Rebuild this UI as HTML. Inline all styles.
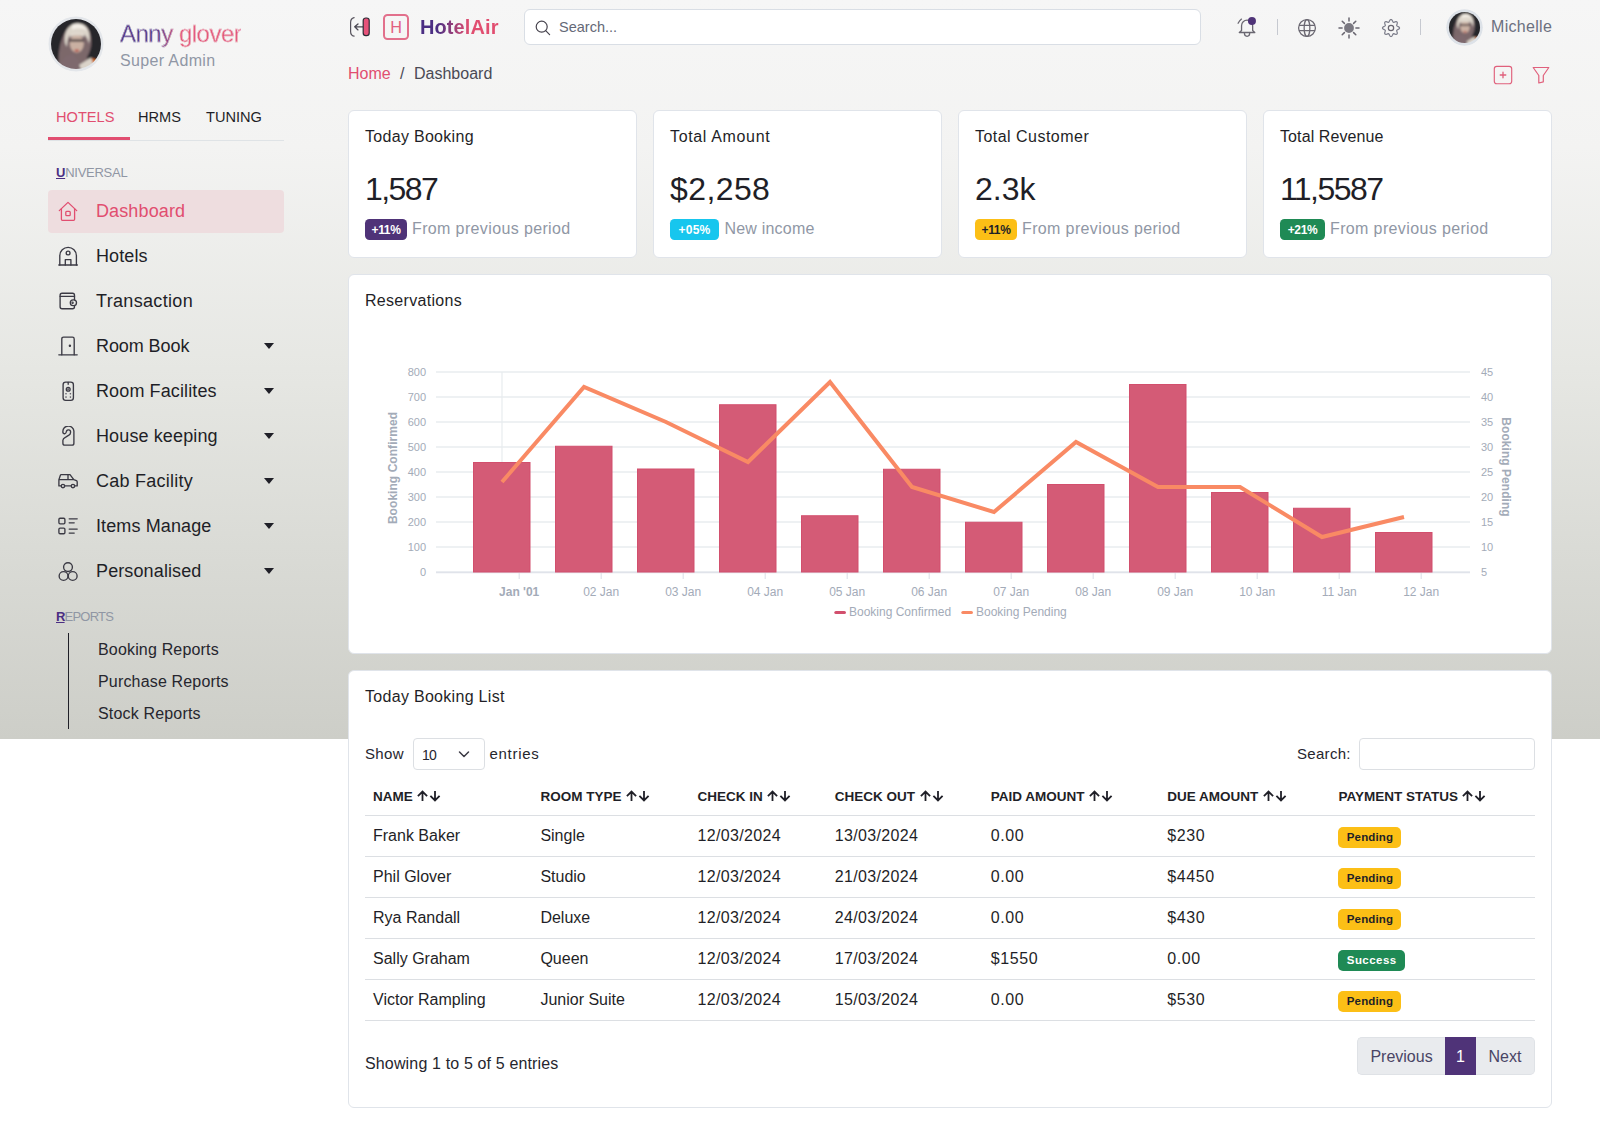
<!DOCTYPE html>
<html lang="en">
<head>
<meta charset="utf-8">
<title>HotelAir - Dashboard</title>
<style>
*{box-sizing:border-box;}
html,body{margin:0;padding:0;}
body{width:1600px;height:1124px;position:relative;overflow:hidden;background:#fff;font-family:"Liberation Sans",Arial,sans-serif;color:#1f1f27;font-size:16px;}
.bg{position:absolute;left:0;top:0;width:1600px;height:739px;background:linear-gradient(to bottom,#f6f6f6 0%,#f3f3f2 20%,#e6e7e3 50%,#cdcec8 100%);}
a{text-decoration:none;color:inherit;}
svg{display:block;}
.abs{position:absolute;white-space:nowrap;}
/* sidebar */
.sidebar{position:absolute;left:0;top:0;width:300px;height:739px;}
.avatar{position:absolute;border-radius:50%;overflow:hidden;}
.uname{left:120px;top:19px;font-size:24px;line-height:30px;letter-spacing:-0.5px;background:linear-gradient(90deg,#472a80 0%,#472a80 30%,#e14e70 50%,#e14e70 100%);-webkit-background-clip:text;background-clip:text;color:transparent;-webkit-text-stroke:0.450px #f5f5f5;}
.uname b{font-weight:400;}
.urole{left:120px;top:51px;font-size:16px;line-height:20px;color:#9097a5;letter-spacing:0.35px;}
.tabs{position:absolute;left:48px;top:100px;width:236px;height:41px;border-bottom:1px solid #dfe3e6;}
.tabs a{position:absolute;top:7px;font-size:14.6px;line-height:20px;color:#1f1f27;}
.tabs a.on{color:#e14e70;}
.tabs .bar{position:absolute;left:0;top:37px;width:82px;height:3px;background:#e14e70;}
.mlabel{font-size:13px;line-height:16px;color:#9096a4;left:56px;}
.mlabel u{color:#4b2e83;text-decoration:underline;font-weight:700;}
.menu{position:absolute;left:48px;top:190px;width:236px;margin:0;padding:0;list-style:none;}
.menu li{position:relative;height:43px;margin-bottom:2px;border-radius:4px;}
.menu li.on{background:#eedddf;color:#e14e70;}
.menu li svg.ic{position:absolute;left:9px;top:11px;width:22px;height:22px;}
.menu li span{position:absolute;left:48px;top:10px;font-size:18px;line-height:23px;white-space:nowrap;letter-spacing:0.12px;}
.menu li i{position:absolute;left:216px;top:18.200px;width:0;height:0;border-left:5.5px solid transparent;border-right:5.5px solid transparent;border-top:6px solid #1f1f27;}
.sub{position:absolute;left:68px;top:633px;height:96px;border-left:1.5px solid #1f1f27;}
.sub a{position:absolute;left:29px;font-size:16px;line-height:20px;white-space:nowrap;color:#26262e;letter-spacing:0.17px;}
/* main */
main{position:absolute;left:0;top:0;width:1600px;height:1124px;}
.card{position:absolute;background:#fff;border:1px solid #e0e4ea;border-radius:6px;}
.ctitle{position:absolute;left:16px;top:16px;letter-spacing:0.3px;margin:0;font-size:16px;line-height:20px;font-weight:400;color:#1f1f27;white-space:nowrap;}
.stat{top:110px;width:289px;height:148px;}
.stat .num{position:absolute;left:16px;top:58px;font-size:32px;line-height:40px;color:#1f1f27;white-space:nowrap;}
.stat .bd{position:absolute;left:16px;top:108px;height:21px;border-radius:4.5px;font-size:12px;font-weight:700;line-height:22.500px;color:#fff;text-align:center;white-space:nowrap;letter-spacing:-0.350px;}
.stat .cap{position:absolute;top:108px;font-size:16px;line-height:20px;color:#9097a5;white-space:nowrap;letter-spacing:0.37px;}
.chartcard{left:348px;top:274px;width:1204px;height:380px;}
.chart{position:absolute;left:-1px;top:-1px;}
.tablecard{left:348px;top:670px;width:1204px;height:438px;}
/* header */
.search{position:absolute;left:524px;top:9px;width:677px;height:36px;background:#fff;border:1px solid #d9dee5;border-radius:6px;}
.search span{position:absolute;left:34px;top:8px;font-size:14.5px;line-height:18px;color:#656977;}
.vdiv{position:absolute;top:19px;width:1px;height:16px;background:#c6c9d0;}
.crumb{top:64px;font-size:16px;line-height:20px;}
/* table */
.tbl{position:absolute;left:16px;top:103px;width:1170px;border-collapse:collapse;}
.tbl th{height:41px;padding:4px 8px 0;text-align:left;font-size:13.5px;font-weight:700;color:#1f1f27;border-bottom:1px solid #dcdfe3;white-space:nowrap;}
.tbl td{height:41px;padding:0 8px;font-size:16px;color:#1f1f27;border-bottom:1px solid #dcdfe3;white-space:nowrap;}
.pill{display:inline-block;height:21px;line-height:21px;padding:0 8.3px;letter-spacing:0.15px;border-radius:5px;font-size:11.5px;font-weight:700;vertical-align:middle;position:relative;top:2px;}
.pill.p{background:#fcbf16;color:#1f1f27;}
.pill.s{background:#1f8a55;color:#fff;}
.ctl{font-size:16px;line-height:20px;color:#26262e;}
.box{position:absolute;background:#fff;border:1px solid #dcdfe3;border-radius:4px;}
.so{display:inline-block;width:24px;height:12px;margin-left:4.500px;vertical-align:-1.500px;}
.tbl td.d{letter-spacing:0.35px;}
.tbl td.m{letter-spacing:0.6px;}
.mlabel.u2{letter-spacing:-0.25px;}
.mlabel.r2{letter-spacing:-0.8px;}
.pager{position:absolute;left:1008px;top:366px;width:178px;height:38px;}
.pager a{position:absolute;top:0;height:38px;line-height:37px;font-size:16px;color:#4a4565;text-align:center;background:#e9ebee;border:1px solid #dfe2e6;}
.pager a.pv{border-right:0;border-radius:5px 0 0 5px;}
.pager a.nx{border-left:0;border-radius:0 5px 5px 0;}
.pager a.on{background:#4f3378;border-color:#4f3378;color:#fff;}

</style>
</head>
<body>
<div class="bg"></div>
<aside class="sidebar">
  <svg class="avatar" style="left:48px;top:16px;width:56px;height:56px" viewBox="0 0 56 56">
    <defs><clipPath id="av1"><circle cx="28" cy="28" r="25"/></clipPath><filter id="bl1"><feGaussianBlur stdDeviation="1.1"/></filter></defs>
    <circle cx="28" cy="28" r="27.5" fill="#e3e6ea"/>
    <g clip-path="url(#av1)"><g filter="url(#bl1)">
      <rect width="56" height="56" fill="#25282c"/>
      <path d="M12 56 C9 42 11 24 19 13 C26 5 39 6 42 17 C45 28 42 36 39 41 L44 56 Z" fill="#7b676b"/>
      <path d="M17 27 C15 13 24 6 32 7.500 C40 9 43 17 41 28 C40 22 37 18 33 17 L22 18 C20 21 19 25 19 31 Z" fill="#dcd5ca"/>
      <path d="M24 9 C30 6 37 9 39 15 C35 12 29 12 24 14 Z" fill="#f3eee6"/>
      <ellipse cx="28.800" cy="27.500" rx="7" ry="9.300" fill="#c9b0a2"/>
      <path d="M21.500 17.500 C25 14.500 33 14.500 36 18 L36 21 C32 19 25 19 21.500 21.500 Z" fill="#e0d8cd"/>
      <path d="M21.500 24.500 h14.500" stroke="#4a4042" stroke-width="2.200"/>
      <path d="M26.800 34.500 h4" stroke="#b5483a" stroke-width="1.900"/>
      <path d="M12 56 C12 44 17 38 25 39 L31 45 L30 56 Z" fill="#7e696e"/>
      <path d="M31 49 L43 41.500 L47 50 L35 57 Z" fill="#dad3c9"/>
      <path d="M43.500 42 L49 44 L46 51 Z" fill="#d2691e"/>
    </g></g>
  </svg>
  <div class="abs uname">Anny <b>glover</b></div>
  <div class="abs urole">Super Admin</div>
  <nav class="tabs">
    <a class="on" style="left:8px">HOTELS</a>
    <a style="left:90px">HRMS</a>
    <a style="left:158px">TUNING</a>
    <div class="bar"></div>
  </nav>
  <div class="abs mlabel u2" style="top:165px"><u>U</u>NIVERSAL</div>
  <ul class="menu">
    <li class="on"><svg class="ic" viewBox="0 0 22 22" fill="none" stroke="#e14e70" stroke-width="1.300" stroke-linecap="round" stroke-linejoin="round"><path d="M2.300 9.600 L11 1.400 L19.700 9.600"/><path d="M4.400 7.800 V18.300 Q4.400 19.300 5.400 19.300 H16.600 Q17.600 19.300 17.600 18.300 V7.800"/><rect x="8.800" y="10.300" width="4.400" height="4.400" rx="0.900"/></svg><span>Dashboard</span></li>
    <li><svg class="ic" viewBox="0 0 22 22" fill="none" stroke="#3b3a44" stroke-width="1.350" stroke-linecap="round" stroke-linejoin="round"><path d="M2.800 19 V9.700 A8.300 8.300 0 0 1 19.400 9.700 V19"/><path d="M1.800 19 H20.400"/><circle cx="11.100" cy="7" r="1.900"/><path d="M8.300 19 V13.600 H13.900 V19"/></svg><span>Hotels</span></li>
    <li><svg class="ic" viewBox="0 0 22 22" fill="none" stroke="#3b3a44" stroke-width="1.350" stroke-linecap="round" stroke-linejoin="round"><path d="M17.500 8.800 V4.200 Q17.500 2.200 15.500 2.200 H5.100 Q3.100 2.200 3.100 4.200 V15.700 Q3.100 17.700 5.100 17.700 H15.500 Q17.500 17.700 17.500 15.700 V14.600"/><path d="M3.100 5.300 H17.500"/><rect x="13.300" y="8.800" width="6.200" height="5.800" rx="2.900"/><circle cx="15.600" cy="11.700" r="0.500"/></svg><span style="letter-spacing:0.33px">Transaction</span></li>
    <li><svg class="ic" viewBox="0 0 22 22" fill="none" stroke="#3b3a44" stroke-width="1.350" stroke-linecap="round" stroke-linejoin="round"><path d="M4.800 18.800 V2.900 Q4.800 1.100 6.600 1.100 H15.400 Q17.200 1.100 17.200 2.900 V18.800"/><path d="M1.800 18.800 H20.200"/><circle cx="12.900" cy="9.800" r="0.550" fill="#3b3a44"/></svg><span style="letter-spacing:-0.08px">Room Book</span><i></i></li>
    <li><svg class="ic" viewBox="0 0 22 22" fill="none" stroke="#3b3a44" stroke-width="1.350" stroke-linecap="round" stroke-linejoin="round"><rect x="6.100" y="1.100" width="10.300" height="18.200" rx="2.600"/><circle cx="11.200" cy="8.200" r="1.900"/><circle cx="11.200" cy="8.200" r="0.300"/><path d="M11.200 1.300 V3.300"/><g stroke="none" fill="#55535e"><circle cx="9" cy="12.800" r="0.800"/><circle cx="13.400" cy="12.800" r="0.800"/><circle cx="9" cy="16.100" r="0.800"/><circle cx="13.400" cy="16.100" r="0.800"/></g></svg><span>Room Facilites</span><i></i></li>
    <li><svg class="ic" viewBox="0 0 22 22" fill="none" stroke="#3b3a44" stroke-width="1.350" stroke-linecap="round" stroke-linejoin="round"><path d="M6.900 7.600 Q5.600 7 5.900 5.600 A5.500 5.200 0 0 1 16.900 5 V17.200 Q16.900 19.100 15 19.100 H7.800 Q5.900 19.100 5.900 17.200 V14.200 Q5.900 12.500 8.700 11.100 L11.900 9.200 Q13.600 8 13.500 6.500 A2.100 2.100 0 0 0 9.400 5.500 L8.800 7 Q8 8.200 6.900 7.600 Z"/></svg><span>House keeping</span><i></i></li>
    <li><svg class="ic" viewBox="0 0 22 22" fill="none" stroke="#3b3a44" stroke-width="1.350" stroke-linecap="round" stroke-linejoin="round"><path d="M1.900 8.600 V14.900 H4.200 M7.700 14.900 H14.200 M17.700 14.900 H20.200 V11 Q20.200 10 19.400 9.600 L16.800 8.600 L13 3.600 H4.200 Q3.600 3.600 3.400 4.200 L1.900 8.600 H16.800 M11 3.600 V8.600"/><circle cx="5.950" cy="15" r="1.700"/><circle cx="15.950" cy="15" r="1.700"/></svg><span style="letter-spacing:0.25px">Cab Facility</span><i></i></li>
    <li><svg class="ic" viewBox="0 0 22 22" fill="none" stroke="#3b3a44" stroke-width="1.350" stroke-linecap="round" stroke-linejoin="round"><rect x="1.900" y="2.200" width="6" height="5.600" rx="1.200"/><rect x="1.900" y="12.100" width="6" height="5.600" rx="1.200"/><path d="M12.200 2.800 H20.200 M12.200 6.800 H17.200 M12.200 13.100 H20.200 M12.200 17.100 H17.200"/></svg><span>Items Manage</span><i></i></li>
    <li><svg class="ic" viewBox="0 0 22 22" fill="none" stroke="#3b3a44" stroke-width="1.350" stroke-linecap="round" stroke-linejoin="round"><circle cx="11" cy="6.100" r="4.400"/><circle cx="6.550" cy="15" r="4.400"/><circle cx="15.700" cy="15" r="4.400"/></svg><span>Personalised</span><i></i></li>
  </ul>
  <div class="abs mlabel r2" style="top:609px"><u>R</u>EPORTS</div>
  <div class="sub">
    <a style="top:6.500px">Booking Reports</a>
    <a style="top:38.500px">Purchase Reports</a>
    <a style="top:70.500px">Stock Reports</a>
  </div>
</aside>

<main>
<header>
  <svg class="abs" style="left:348px;top:14px;width:26px;height:26px" viewBox="0 0 26 26" fill="none">
    <path d="M6.100 3.700 Q2.600 4.500 2.600 8.500 V17.500 Q2.600 21.500 6.100 22.200" stroke="#55525c" stroke-width="1.200" stroke-linecap="round"/>
    <path d="M14.800 12.850 H6.700 M10 9.900 L6.700 12.850 L10 15.900" stroke="#4a4852" stroke-width="1.300" stroke-linecap="round" stroke-linejoin="round"/>
    <rect x="15.200" y="4" width="6" height="17.600" rx="2.600" fill="#e75279" stroke="#2d2b36" stroke-width="1.200"/>
  </svg>
  <div class="abs" style="left:383px;top:14px;width:26px;height:26px;border:2px solid #e2708c;border-radius:4.500px;color:#e2607f;font-size:16.200px;line-height:22px;text-align:center">H</div>
  <div class="abs" style="left:420px;top:15px;font-size:20px;line-height:24px;font-weight:700;letter-spacing:0.100px;background:linear-gradient(90deg,#4b2e83 0%,#4b2e83 22%,#e14e70 62%,#e14e70 100%);-webkit-background-clip:text;background-clip:text;color:transparent">HotelAir</div>
  <div class="search">
    <svg class="abs" style="left:9px;top:9px;width:18px;height:18px" viewBox="0 0 18 18" fill="none" stroke="#46434d" stroke-width="1.200" stroke-linecap="round"><circle cx="7.700" cy="7.700" r="5.500"/><path d="M11.700 11.700 L15.600 15.600"/></svg>
    <span>Search...</span>
  </div>
  <!-- bell -->
  <svg class="abs" style="left:1235px;top:14px;width:26px;height:26px" viewBox="0 0 26 26" fill="none" stroke="#6a6771" stroke-width="1.300" stroke-linecap="round" stroke-linejoin="round">
    <path d="M6.550 16.500 V11.700 A5.550 5.550 0 0 1 17.650 11.700 V16.500 L19.800 18.500 H4.300 Z"/>
    <path d="M9.400 19.100 A2.650 3.200 0 0 0 14.700 19.100"/>
    <path d="M3.100 9.250 Q4.500 6.800 6.500 5.100"/>
    <circle cx="16.950" cy="6.950" r="4" fill="#4f3378" stroke="none"/>
  </svg>
  <div class="vdiv" style="left:1277px"></div>
  <!-- globe -->
  <svg class="abs" style="left:1297px;top:17.800px;width:20px;height:20px" viewBox="0 0 20 20" fill="none" stroke="#6a6771" stroke-width="1.250">
    <circle cx="10" cy="10" r="8.400"/><ellipse cx="10" cy="10" rx="2.850" ry="8.400"/><path d="M2 7.400 H18 M2 12.600 H18"/>
  </svg>
  <!-- sun -->
  <svg class="abs" style="left:1338px;top:17.200px;width:22px;height:22px" viewBox="0 0 22 22" fill="none" stroke="#6a6771" stroke-width="1.500" stroke-linecap="round">
    <circle cx="11" cy="11" r="4.900" fill="#7a7881" stroke="none"/>
    <path d="M17.90 11.00 L21.00 11.00 M15.60 15.60 L17.79 17.79 M11.00 17.90 L11.00 21.00 M6.40 15.60 L4.21 17.79 M4.10 11.00 L1.00 11.00 M6.40 6.40 L4.21 4.21 M11.00 4.10 L11.00 1.00 M15.60 6.40 L17.79 4.21"/>
  </svg>
  <!-- gear -->
  <svg class="abs" style="left:1381px;top:18px;width:20px;height:20px" viewBox="0 0 20 20" fill="none" stroke="#7d7e8b" stroke-width="1.250" stroke-linejoin="round">
    <path d="M18.50 10.00 L18.33 10.55 L17.86 11.03 L17.21 11.43 L16.54 11.75 L16.02 12.04 L15.73 12.37 L15.70 12.81 L15.87 13.39 L16.11 14.08 L16.29 14.82 L16.27 15.50 L16.01 16.01 L15.50 16.27 L14.82 16.29 L14.08 16.11 L13.39 15.87 L12.81 15.70 L12.37 15.73 L12.04 16.02 L11.75 16.54 L11.43 17.21 L11.03 17.86 L10.55 18.33 L10.00 18.50 L9.45 18.33 L8.97 17.86 L8.57 17.21 L8.25 16.54 L7.96 16.02 L7.63 15.73 L7.19 15.70 L6.61 15.87 L5.92 16.11 L5.18 16.29 L4.50 16.27 L3.99 16.01 L3.73 15.50 L3.71 14.82 L3.89 14.08 L4.13 13.39 L4.30 12.81 L4.27 12.37 L3.98 12.04 L3.46 11.75 L2.79 11.43 L2.14 11.03 L1.67 10.55 L1.50 10.00 L1.67 9.45 L2.14 8.97 L2.79 8.57 L3.46 8.25 L3.98 7.96 L4.27 7.63 L4.30 7.19 L4.13 6.61 L3.89 5.92 L3.71 5.18 L3.73 4.50 L3.99 3.99 L4.50 3.73 L5.18 3.71 L5.92 3.89 L6.61 4.13 L7.19 4.30 L7.63 4.27 L7.96 3.98 L8.25 3.46 L8.57 2.79 L8.97 2.14 L9.45 1.67 L10.00 1.50 L10.55 1.67 L11.03 2.14 L11.43 2.79 L11.75 3.46 L12.04 3.98 L12.37 4.27 L12.81 4.30 L13.39 4.13 L14.08 3.89 L14.82 3.71 L15.50 3.73 L16.01 3.99 L16.27 4.50 L16.29 5.18 L16.11 5.92 L15.87 6.61 L15.70 7.19 L15.73 7.63 L16.02 7.96 L16.54 8.25 L17.21 8.57 L17.86 8.97 L18.33 9.45 Z"/>
    <circle cx="10" cy="10" r="2.650" stroke="#6a6771"/>
  </svg>
  <div class="vdiv" style="left:1420px"></div>
  <svg class="avatar" style="left:1445.500px;top:8.500px;width:37px;height:37px" viewBox="0 0 56 56">
    <defs><clipPath id="av2"><circle cx="28" cy="28" r="23.500"/></clipPath><filter id="bl2"><feGaussianBlur stdDeviation="1.400"/></filter></defs>
    <circle cx="28" cy="28" r="27.700" fill="#dde2e8"/>
    <g clip-path="url(#av2)"><g filter="url(#bl2)">
      <rect width="56" height="56" fill="#25282c"/>
      <path d="M12 56 C9 42 11 24 19 13 C26 5 39 6 42 17 C45 28 42 36 39 41 L44 56 Z" fill="#7b676b"/>
      <path d="M17 27 C15 13 24 6 32 7.500 C40 9 43 17 41 28 C40 22 37 18 33 17 L22 18 C20 21 19 25 19 31 Z" fill="#dcd5ca"/>
      <path d="M24 9 C30 6 37 9 39 15 C35 12 29 12 24 14 Z" fill="#f3eee6"/>
      <ellipse cx="28.800" cy="27.500" rx="7" ry="9.300" fill="#c9b0a2"/>
      <path d="M21.500 17.500 C25 14.500 33 14.500 36 18 L36 21 C32 19 25 19 21.500 21.500 Z" fill="#e0d8cd"/>
      <path d="M21.500 24.500 h14.500" stroke="#4a4042" stroke-width="2.200"/>
      <path d="M26.800 34.500 h4" stroke="#b5483a" stroke-width="1.900"/>
      <path d="M12 56 C12 44 17 38 25 39 L31 45 L30 56 Z" fill="#7e696e"/>
      <path d="M31 49 L43 41.500 L47 50 L35 57 Z" fill="#dad3c9"/>
      <path d="M43.500 42 L49 44 L46 51 Z" fill="#d2691e"/>
    </g></g>
  </svg>
  <div class="abs" style="left:1491px;top:17px;font-size:16px;line-height:20px;letter-spacing:0.300px;color:#6c7080">Michelle</div>
  <div class="abs crumb" style="left:348px;color:#e14e70">Home</div>
  <div class="abs crumb" style="left:400px;color:#4a4a55">/</div>
  <div class="abs crumb" style="left:414px;color:#4a4a55">Dashboard</div>
  <svg class="abs" style="left:1493px;top:65px;width:20px;height:20px" viewBox="0 0 20 20" fill="none" stroke="#e0607c" stroke-width="1.150" stroke-linecap="round"><rect x="1.300" y="1.300" width="17.400" height="17.400" rx="2.500"/><path d="M10 7.200 V12.800 M7.200 10 H12.800" stroke-width="1.300"/></svg>
  <svg class="abs" style="left:1531px;top:65px;width:20px;height:20px" viewBox="0 0 20 20" fill="none" stroke="#e0607c" stroke-width="1.200" stroke-linejoin="round"><path d="M2.200 2.500 H17.800 L12.300 10.500 V16.800 L7.800 18 V10.500 Z"/></svg>
</header>

<section class="card stat" style="left:348px">
  <h5 class="ctitle">Today Booking</h5>
  <div class="num" style="letter-spacing:-1.6px">1,587</div>
  <span class="bd" style="background:#4f3378;width:42px">+11%</span>
  <span class="cap" style="left:63px">From previous period</span>
</section>
<section class="card stat" style="left:653px">
  <h5 class="ctitle" style="letter-spacing:0.65px">Total Amount</h5>
  <div class="num" style="letter-spacing:0.4px">$2,258</div>
  <span class="bd" style="background:#17c6ee;width:49px;letter-spacing:0.2px">+05%</span>
  <span class="cap" style="left:70.5px;letter-spacing:0.2px">New income</span>
</section>
<section class="card stat" style="left:958px">
  <h5 class="ctitle" style="letter-spacing:0.47px">Total Customer</h5>
  <div class="num">2.3k</div>
  <span class="bd" style="background:#fcbf16;color:#1f1f27;width:42px">+11%</span>
  <span class="cap" style="left:63px">From previous period</span>
</section>
<section class="card stat" style="left:1263px">
  <h5 class="ctitle" style="letter-spacing:0.1px">Total Revenue</h5>
  <div class="num" style="letter-spacing:-1.55px">11,5587</div>
  <span class="bd" style="background:#1f8a55;width:45px">+21%</span>
  <span class="cap" style="left:66px">From previous period</span>
</section>

<section class="card chartcard">
<h5 class="ctitle">Reservations</h5>
<svg class="chart" width="1204" height="379" viewBox="0 0 1204 379" font-family="'Liberation Sans', Helvetica, Arial, sans-serif">
<line x1="88" x2="1122" y1="98" y2="98" stroke="#e8ecef" stroke-width="1.4"/>
<line x1="88" x2="1122" y1="123" y2="123" stroke="#e8ecef" stroke-width="1.4"/>
<line x1="88" x2="1122" y1="148" y2="148" stroke="#e8ecef" stroke-width="1.4"/>
<line x1="88" x2="1122" y1="173" y2="173" stroke="#e8ecef" stroke-width="1.4"/>
<line x1="88" x2="1122" y1="198" y2="198" stroke="#e8ecef" stroke-width="1.4"/>
<line x1="88" x2="1122" y1="223" y2="223" stroke="#e8ecef" stroke-width="1.4"/>
<line x1="88" x2="1122" y1="248" y2="248" stroke="#e8ecef" stroke-width="1.4"/>
<line x1="88" x2="1122" y1="273" y2="273" stroke="#e8ecef" stroke-width="1.4"/>
<line x1="88" x2="1122" y1="298" y2="298" stroke="#e8ecef" stroke-width="1.4"/>
<line x1="154" x2="154" y1="98" y2="298" stroke="#e8ecef" stroke-width="1.2"/>
<line x1="88" x2="1122" y1="298.5" y2="298.5" stroke="#e0e3ea" stroke-width="1.4"/>
<rect x="125.5" y="188.5" width="56.5" height="109.5" fill="#d45b76" stroke="#d24f6d" stroke-width="1"/>
<rect x="207.5" y="172.25" width="56.5" height="125.75" fill="#d45b76" stroke="#d24f6d" stroke-width="1"/>
<rect x="289.5" y="195.0" width="56.5" height="103.0" fill="#d45b76" stroke="#d24f6d" stroke-width="1"/>
<rect x="371.5" y="130.75" width="56.5" height="167.25" fill="#d45b76" stroke="#d24f6d" stroke-width="1"/>
<rect x="453.5" y="241.75" width="56.5" height="56.25" fill="#d45b76" stroke="#d24f6d" stroke-width="1"/>
<rect x="535.5" y="195.25" width="56.5" height="102.75" fill="#d45b76" stroke="#d24f6d" stroke-width="1"/>
<rect x="617.5" y="248.25" width="56.5" height="49.75" fill="#d45b76" stroke="#d24f6d" stroke-width="1"/>
<rect x="699.5" y="210.5" width="56.5" height="87.5" fill="#d45b76" stroke="#d24f6d" stroke-width="1"/>
<rect x="781.5" y="110.5" width="56.5" height="187.5" fill="#d45b76" stroke="#d24f6d" stroke-width="1"/>
<rect x="863.5" y="218.5" width="56.5" height="79.5" fill="#d45b76" stroke="#d24f6d" stroke-width="1"/>
<rect x="945.5" y="234.25" width="56.5" height="63.75" fill="#d45b76" stroke="#d24f6d" stroke-width="1"/>
<rect x="1027.5" y="258.5" width="56.5" height="39.5" fill="#d45b76" stroke="#d24f6d" stroke-width="1"/>
<line x1="171.2" x2="171.2" y1="299" y2="305" stroke="#e0e3ea" stroke-width="1.2"/>
<text x="171.2" y="322" text-anchor="middle" font-size="12" fill="#a3abb8" font-weight="700">Jan '01</text>
<line x1="253.2" x2="253.2" y1="299" y2="305" stroke="#e0e3ea" stroke-width="1.2"/>
<text x="253.2" y="322" text-anchor="middle" font-size="12" fill="#a3abb8">02 Jan</text>
<line x1="335.2" x2="335.2" y1="299" y2="305" stroke="#e0e3ea" stroke-width="1.2"/>
<text x="335.2" y="322" text-anchor="middle" font-size="12" fill="#a3abb8">03 Jan</text>
<line x1="417.2" x2="417.2" y1="299" y2="305" stroke="#e0e3ea" stroke-width="1.2"/>
<text x="417.2" y="322" text-anchor="middle" font-size="12" fill="#a3abb8">04 Jan</text>
<line x1="499.2" x2="499.2" y1="299" y2="305" stroke="#e0e3ea" stroke-width="1.2"/>
<text x="499.2" y="322" text-anchor="middle" font-size="12" fill="#a3abb8">05 Jan</text>
<line x1="581.2" x2="581.2" y1="299" y2="305" stroke="#e0e3ea" stroke-width="1.2"/>
<text x="581.2" y="322" text-anchor="middle" font-size="12" fill="#a3abb8">06 Jan</text>
<line x1="663.2" x2="663.2" y1="299" y2="305" stroke="#e0e3ea" stroke-width="1.2"/>
<text x="663.2" y="322" text-anchor="middle" font-size="12" fill="#a3abb8">07 Jan</text>
<line x1="745.2" x2="745.2" y1="299" y2="305" stroke="#e0e3ea" stroke-width="1.2"/>
<text x="745.2" y="322" text-anchor="middle" font-size="12" fill="#a3abb8">08 Jan</text>
<line x1="827.2" x2="827.2" y1="299" y2="305" stroke="#e0e3ea" stroke-width="1.2"/>
<text x="827.2" y="322" text-anchor="middle" font-size="12" fill="#a3abb8">09 Jan</text>
<line x1="909.2" x2="909.2" y1="299" y2="305" stroke="#e0e3ea" stroke-width="1.2"/>
<text x="909.2" y="322" text-anchor="middle" font-size="12" fill="#a3abb8">10 Jan</text>
<line x1="991.2" x2="991.2" y1="299" y2="305" stroke="#e0e3ea" stroke-width="1.2"/>
<text x="991.2" y="322" text-anchor="middle" font-size="12" fill="#a3abb8">11 Jan</text>
<line x1="1073.2" x2="1073.2" y1="299" y2="305" stroke="#e0e3ea" stroke-width="1.2"/>
<text x="1073.2" y="322" text-anchor="middle" font-size="12" fill="#a3abb8">12 Jan</text>
<text x="78" y="302" text-anchor="end" font-size="11" fill="#a3abb8">0</text>
<text x="1133" y="302" text-anchor="start" font-size="11" fill="#a3abb8">5</text>
<text x="78" y="277" text-anchor="end" font-size="11" fill="#a3abb8">100</text>
<text x="1133" y="277" text-anchor="start" font-size="11" fill="#a3abb8">10</text>
<text x="78" y="252" text-anchor="end" font-size="11" fill="#a3abb8">200</text>
<text x="1133" y="252" text-anchor="start" font-size="11" fill="#a3abb8">15</text>
<text x="78" y="227" text-anchor="end" font-size="11" fill="#a3abb8">300</text>
<text x="1133" y="227" text-anchor="start" font-size="11" fill="#a3abb8">20</text>
<text x="78" y="202" text-anchor="end" font-size="11" fill="#a3abb8">400</text>
<text x="1133" y="202" text-anchor="start" font-size="11" fill="#a3abb8">25</text>
<text x="78" y="177" text-anchor="end" font-size="11" fill="#a3abb8">500</text>
<text x="1133" y="177" text-anchor="start" font-size="11" fill="#a3abb8">30</text>
<text x="78" y="152" text-anchor="end" font-size="11" fill="#a3abb8">600</text>
<text x="1133" y="152" text-anchor="start" font-size="11" fill="#a3abb8">35</text>
<text x="78" y="127" text-anchor="end" font-size="11" fill="#a3abb8">700</text>
<text x="1133" y="127" text-anchor="start" font-size="11" fill="#a3abb8">40</text>
<text x="78" y="102" text-anchor="end" font-size="11" fill="#a3abb8">800</text>
<text x="1133" y="102" text-anchor="start" font-size="11" fill="#a3abb8">45</text>
<text transform="translate(49,194) rotate(-90)" text-anchor="middle" font-size="12" font-weight="700" letter-spacing="0.05" fill="#a3abb8">Booking Confirmed</text>
<text transform="translate(1154,193) rotate(90)" text-anchor="middle" font-size="12" font-weight="700" letter-spacing="0.05" fill="#a3abb8">Booking Pending</text>
<polyline points="154,208 236,113 318,148 400,188 482,108 564,213 646,238 728,168 810,213 892,213 974,263 1056,243" fill="none" stroke="#f98a64" stroke-width="4" stroke-linejoin="miter" stroke-linecap="butt"/>
<rect x="486.3" y="336.9" width="11.7" height="3.2" rx="1.6" fill="#d24f6d"/>
<text x="501" y="342" font-size="12" fill="#a3abb8">Booking Confirmed</text>
<rect x="613.3" y="336.9" width="11.7" height="3.2" rx="1.6" fill="#f98a64"/>
<text x="628" y="342" font-size="12" fill="#a3abb8">Booking Pending</text>
</svg>
</section>
<section class="card tablecard">
  <h5 class="ctitle">Today Booking List</h5>
  <div class="abs ctl" style="left:16px;top:73px;font-size:15px;letter-spacing:0.35px">Show</div>
  <div class="box" style="left:64px;top:67px;width:72px;height:32px">
    <span class="abs" style="left:8px;top:6.500px;font-size:14px;line-height:18px;letter-spacing:-0.800px;color:#26262e">10</span>
    <svg class="abs" style="left:43px;top:8.400px;width:14px;height:14px" viewBox="0 0 14 14" fill="none" stroke="#3b3a44" stroke-width="1.500" stroke-linecap="round" stroke-linejoin="round"><path d="M2.500 5 L7 9.500 L11.500 5"/></svg>
  </div>
  <div class="abs ctl" style="left:140.500px;top:73px;font-size:15px;letter-spacing:0.700px">entries</div>
  <div class="abs ctl" style="left:948px;top:73px;font-size:15px;letter-spacing:0.300px">Search:</div>
  <div class="box" style="left:1010px;top:67px;width:176px;height:32px"></div>
  <table class="tbl">
    <colgroup><col style="width:167.400px"><col style="width:157px"><col style="width:137.400px"><col style="width:156px"><col style="width:176.500px"><col style="width:171.200px"><col></colgroup>
    <thead><tr>
      <th>NAME<svg class="so" viewBox="0 0 24 12" fill="none" stroke="#1f1f27" stroke-width="1.800"><path d="M5.500 11 V1.500 M0.900 6.200 L5.500 1.500 L10.100 6.200 M18 1 V10.500 M13.400 5.800 L18 10.500 L22.600 5.800"/></svg></th><th>ROOM TYPE<svg class="so" viewBox="0 0 24 12" fill="none" stroke="#1f1f27" stroke-width="1.800"><path d="M5.500 11 V1.500 M0.900 6.200 L5.500 1.500 L10.100 6.200 M18 1 V10.500 M13.400 5.800 L18 10.500 L22.600 5.800"/></svg></th><th>CHECK IN<svg class="so" viewBox="0 0 24 12" fill="none" stroke="#1f1f27" stroke-width="1.800"><path d="M5.500 11 V1.500 M0.900 6.200 L5.500 1.500 L10.100 6.200 M18 1 V10.500 M13.400 5.800 L18 10.500 L22.600 5.800"/></svg></th><th>CHECK OUT<svg class="so" viewBox="0 0 24 12" fill="none" stroke="#1f1f27" stroke-width="1.800"><path d="M5.500 11 V1.500 M0.900 6.200 L5.500 1.500 L10.100 6.200 M18 1 V10.500 M13.400 5.800 L18 10.500 L22.600 5.800"/></svg></th><th>PAID AMOUNT<svg class="so" viewBox="0 0 24 12" fill="none" stroke="#1f1f27" stroke-width="1.800"><path d="M5.500 11 V1.500 M0.900 6.200 L5.500 1.500 L10.100 6.200 M18 1 V10.500 M13.400 5.800 L18 10.500 L22.600 5.800"/></svg></th><th>DUE AMOUNT<svg class="so" viewBox="0 0 24 12" fill="none" stroke="#1f1f27" stroke-width="1.800"><path d="M5.500 11 V1.500 M0.900 6.200 L5.500 1.500 L10.100 6.200 M18 1 V10.500 M13.400 5.800 L18 10.500 L22.600 5.800"/></svg></th><th>PAYMENT STATUS<svg class="so" viewBox="0 0 24 12" fill="none" stroke="#1f1f27" stroke-width="1.800"><path d="M5.500 11 V1.500 M0.900 6.200 L5.500 1.500 L10.100 6.200 M18 1 V10.500 M13.400 5.800 L18 10.500 L22.600 5.800"/></svg></th>
    </tr></thead>
    <tbody>
      <tr><td>Frank Baker</td><td>Single</td><td class="d">12/03/2024</td><td class="d">13/03/2024</td><td class="m">0.00</td><td class="m">$230</td><td><span class="pill p">Pending</span></td></tr>
      <tr><td>Phil Glover</td><td>Studio</td><td class="d">12/03/2024</td><td class="d">21/03/2024</td><td class="m">0.00</td><td class="m">$4450</td><td><span class="pill p">Pending</span></td></tr>
      <tr><td>Rya Randall</td><td>Deluxe</td><td class="d">12/03/2024</td><td class="d">24/03/2024</td><td class="m">0.00</td><td class="m">$430</td><td><span class="pill p">Pending</span></td></tr>
      <tr><td>Sally Graham</td><td>Queen</td><td class="d">12/03/2024</td><td class="d">17/03/2024</td><td class="m">$1550</td><td class="m">0.00</td><td><span class="pill s" style="letter-spacing:0.45px">Success</span></td></tr>
      <tr><td>Victor Rampling</td><td>Junior Suite</td><td class="d">12/03/2024</td><td class="d">15/03/2024</td><td class="m">0.00</td><td class="m">$530</td><td><span class="pill p">Pending</span></td></tr>
    </tbody>
  </table>
  <div class="abs ctl" style="left:16px;top:383px;letter-spacing:0.15px">Showing 1 to 5 of 5 entries</div>
  <div class="pager">
    <a class="pv" style="left:0;width:88px">Previous</a><a class="on" style="left:88px;width:31px">1</a><a class="nx" style="left:119px;width:59px">Next</a>
  </div>
</section>

</main>
</body>
</html>
